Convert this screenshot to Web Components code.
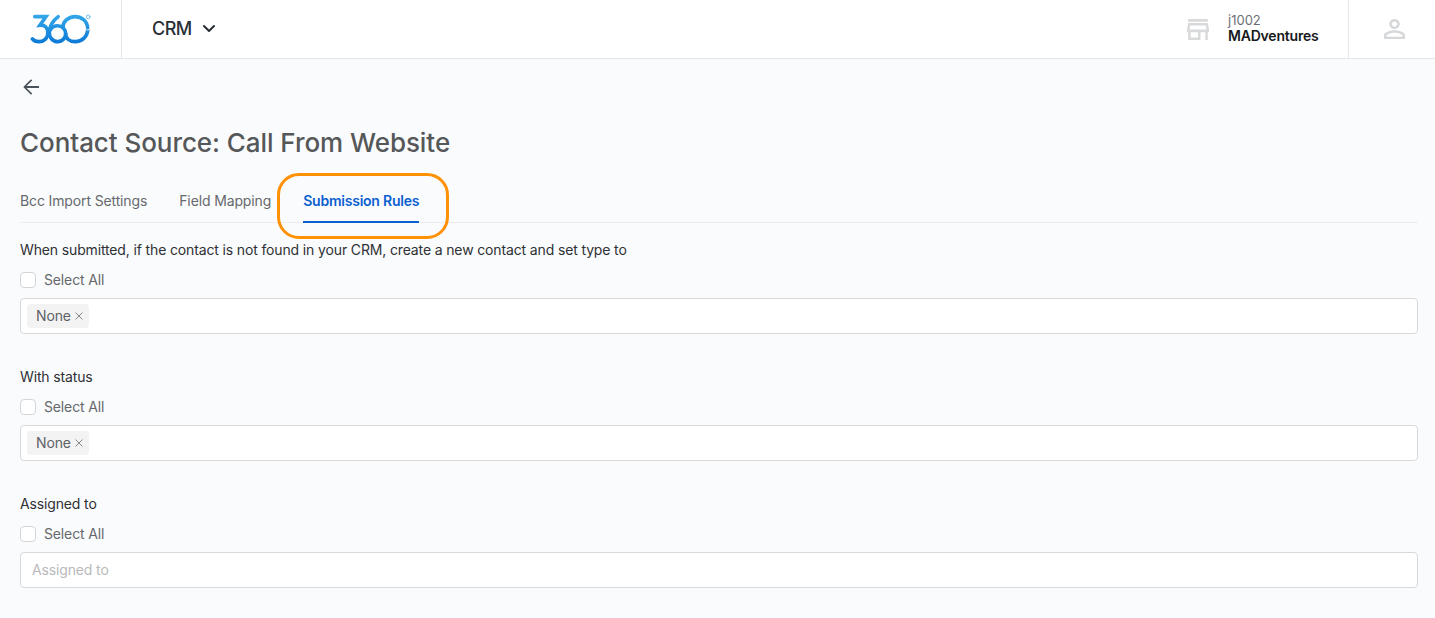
<!DOCTYPE html>
<html>
<head>
<meta charset="utf-8">
<style>
  html, body { margin: 0; padding: 0; }
  body { background: #fafbfd; font-family: Inter, "Liberation Sans", sans-serif; color: #2b2e33; height: 618px; overflow: hidden; }
</style>
</head>
<body>
<app-header></app-header>
<page-body>
  <back-link></back-link>
  <page-title>Contact Source: Call From Website</page-title>
  <tab-bar>
    <tab-item>Bcc Import Settings</tab-item>
    <tab-item>Field Mapping</tab-item>
    <tab-item active callout>Submission Rules</tab-item>
  </tab-bar>
  <rule-field label="When submitted, if the contact is not found in your CRM, create a new contact and set type to" value="None"></rule-field>
  <rule-field label="With status" value="None"></rule-field>
  <rule-field label="Assigned to" placeholder="Assigned to"></rule-field>
</page-body>

<script>
class AppHeader extends HTMLElement {
  constructor() {
    super();
    this.attachShadow({ mode: 'open' });
    this.shadowRoot.innerHTML = `<style>
        :host {
          display: flex;
          align-items: stretch;
          height: 58px;
          background: #fff;
          border-bottom: 1px solid #e4e5e7;
        }

        .logo {
          width: 122px;
          padding-bottom: 1px;
          box-sizing: border-box;
          border-right: 1px solid #e6e7e9;
          display: flex;
          align-items: center;
          justify-content: center;
        }

        .app {
          display: flex;
          align-items: center;
          padding: 0 0 2px 30px;
          font-size: 18px;
          font-weight: 500;
          letter-spacing: -0.5px;
          color: #2a2f37;
          gap: 10px;
          flex: 1;
        }

        .org {
          display: flex;
          align-items: center;
          width: 163px;
          box-sizing: border-box;
          padding-left: 1px;
          gap: 19px;
          border-right: 1px solid #e6e7e9;
        }

        .org svg {
          margin-top: 1px;
        }

        .org div {
          display: flex;
          flex-direction: column;
          line-height: 16px;
          padding-bottom: 3px;
        }

        .org span {
          font-size: 13px;
          color: #6b6f75;
        }

        .org b {
          font-size: 14px;
          font-weight: 600;
          letter-spacing: -0.2px;
          color: #17191c;
        }

        .user {
          width: 86px;
          display: flex;
          align-items: center;
          justify-content: center;
          padding-left: 4px;
          box-sizing: border-box;
        }
    </style>
    <div class="logo">
      <svg width="62" height="30" viewBox="0 0 64 32" fill="none" stroke-linecap="round">
        <defs>
          <linearGradient id="lg" gradientUnits="userSpaceOnUse" x1="0" y1="0" x2="0" y2="32">
            <stop offset="0" stop-color="#35a9ea"/><stop offset="1" stop-color="#0b78d6"/>
          </linearGradient>
        </defs>
        <g stroke="url(#lg)" stroke-width="3.9">
          <path d="M4 2.8H16L9.5 12C15 11.5 18 15 18 20C18 26 13.5 29.5 8.5 29.5C5.5 29.5 3 28.5 1.5 26.5"/>
          <path d="M29 2.8C23.5 7 19.5 13 19.5 20C19.5 25.5 23.5 29.5 28.5 29.5C33 29.5 37 26 37 21C37 16 33 12.5 28.5 12.5C25 12.5 22 14.5 20.5 17"/>
          <path d="M37 21C37 26 41 29.5 47 29.5C54.5 29.5 60.5 24 60.5 16C60.5 8 54.5 2.8 47 2.8C39.5 2.8 34 8.5 34 14"/>
        </g>
        <path d="M58.5 15.5l2 2 2-2" stroke="#fff" stroke-width="1"/>
        <circle cx="61" cy="3" r="2" stroke="#5db6ea" stroke-width=".9"/>
      </svg>
    </div>
    <div class="app">CRM
      <svg width="14" height="14" viewBox="0 0 14 14" fill="none" stroke="#2a2f37" stroke-width="2" stroke-linecap="round" stroke-linejoin="round"><path d="M2 5l5 5 5-5"/></svg>
    </div>
    <div class="org">
      <svg width="22" height="21" viewBox="3 4 18 16" preserveAspectRatio="none" fill="#d8d9db"><path d="M20 4H4v2h16V4zm1 10v-2l-1-5H4l-1 5v2h1v6h10v-6h4v6h2v-6h1zm-9 4H6v-4h6v4zm-6.96-6l.6-3h12.72l.6 3H5.04z"/></svg>
      <div><span>j1002</span><b>MADventures</b></div>
    </div>
    <div class="user">
      <svg width="21" height="20" viewBox="4 4 16 16" preserveAspectRatio="none" fill="#d6d7d9"><path d="M12 5.9c1.16 0 2.1.94 2.1 2.1s-.94 2.1-2.1 2.1S9.9 9.16 9.9 8s.94-2.1 2.1-2.1m0 9c2.97 0 6.1 1.46 6.1 2.1v1.1H5.9V17c0-.64 3.13-2.1 6.1-2.1M12 4C9.79 4 8 5.79 8 8s1.79 4 4 4 4-1.79 4-4-1.79-4-4-4zm0 9c-2.67 0-8 1.34-8 4v3h16v-3c0-2.66-5.33-4-8-4z"/></svg>
    </div>`;
  }
}

class PageBody extends HTMLElement {
  constructor() {
    super();
    this.attachShadow({ mode: 'open' });
    this.shadowRoot.innerHTML = `<style>
        :host {
          display: block;
          padding: 0 17px 0 20px;
        }
    </style><slot></slot>`;
  }
}

class BackLink extends HTMLElement {
  constructor() {
    super();
    this.attachShadow({ mode: 'open' });
    this.shadowRoot.innerHTML = `<style>
        :host {
          display: block;
          padding: 20px 0 0 3px;
          height: 21px;
          line-height: 0;
        }
    </style>
    <svg width="16" height="16" viewBox="4 4 16 16" fill="#4a5359"><path d="M20 11.1H7.6l5.6-5.6L12 4.3 4.3 12l7.7 7.7 1.2-1.2-5.6-5.6H20z"/></svg>`;
  }
}

class PageTitle extends HTMLElement {
  constructor() {
    super();
    this.attachShadow({ mode: 'open' });
    this.shadowRoot.innerHTML = `<style>
        :host {
          display: block;
          margin-top: 25px;
          font-size: 26px;
          line-height: 36px;
          font-weight: 500;
          letter-spacing: -0.06px;
          color: #555759;
        }
    </style><slot></slot>`;
  }
}

class TabBar extends HTMLElement {
  constructor() {
    super();
    this.attachShadow({ mode: 'open' });
    this.shadowRoot.innerHTML = `<style>
        :host {
          display: flex;
          gap: 32px;
          margin-top: 20px;
          height: 41px;
          border-bottom: 1px solid #eceded;
        }
    </style><slot></slot>`;
  }
}

class TabItem extends HTMLElement {
  constructor() {
    super();
    this.attachShadow({ mode: 'open' });
    this.shadowRoot.innerHTML = `<style>
        :host {
          display: block;
          position: relative;
          box-sizing: border-box;
          height: 41px;
          padding-top: 11px;
          font-size: 14px;
          line-height: 18px;
          letter-spacing: -0.13px;
          color: #66696c;
        }

        :host([active]) {
          color: #0a60d0;
          font-weight: 600;
          letter-spacing: -0.23px;
          border-bottom: 2px solid #0a60d0;
          height: 42px;
        }

        .callout {
          display: none;
          position: absolute;
          left: -26px;
          top: -8px;
          width: 172px;
          height: 66px;
          box-sizing: border-box;
          border: 3px solid #ff9106;
          border-radius: 22px;
        }

        :host([callout]) .callout {
          display: block;
        }
    </style><slot></slot><div class="callout"></div>`;
  }
}

class RuleField extends HTMLElement {
  constructor() {
    super();
    this.attachShadow({ mode: 'open' });
    const value = this.getAttribute('value');
    const placeholder = this.getAttribute('placeholder');
    this.shadowRoot.innerHTML = `<style>
        :host {
          display: block;
          height: 127px;
          font-size: 14px;
          line-height: 18px;
          letter-spacing: -0.14px;
        }

        .label {
          padding-top: 18px;
          color: #2f3134;
        }

        .all {
          display: flex;
          align-items: center;
          gap: 8px;
          margin-top: 12px;
          color: #66696c;
        }

        .box {
          width: 16px;
          height: 16px;
          box-sizing: border-box;
          background: #fff;
          border: 1px solid #d4d5d7;
          border-radius: 4px;
        }

        .input {
          display: flex;
          align-items: center;
          box-sizing: border-box;
          height: 36px;
          margin-top: 9px;
          padding: 0 6px;
          background: #fff;
          border: 1px solid #d8d9db;
          border-radius: 4px;
        }

        .chip {
          display: flex;
          align-items: center;
          gap: 4px;
          height: 24px;
          padding: 0 6px 0 9px;
          background: #f3f3f4;
          border-radius: 4px;
          color: #5e6165;
        }

        .ph {
          padding-left: 5px;
          color: #b9babc;
        }
    </style>
    <div class="label">${this.getAttribute('label')}</div>
    <div class="all"><span class="box"></span>Select All</div>
    <div class="input">
      ${value ? `<span class="chip">${value}<svg width="8" height="8" viewBox="0 0 8 8" stroke="#85888b" stroke-width="1"><path d="M.5.5l7 7M7.5.5l-7 7"/></svg></span>` : ''}
      ${placeholder ? `<span class="ph">${placeholder}</span>` : ''}
    </div>`;
  }
}

customElements.define('app-header', AppHeader);
customElements.define('page-body', PageBody);
customElements.define('back-link', BackLink);
customElements.define('page-title', PageTitle);
customElements.define('tab-bar', TabBar);
customElements.define('tab-item', TabItem);
customElements.define('rule-field', RuleField);
</script>
</body>
</html>
